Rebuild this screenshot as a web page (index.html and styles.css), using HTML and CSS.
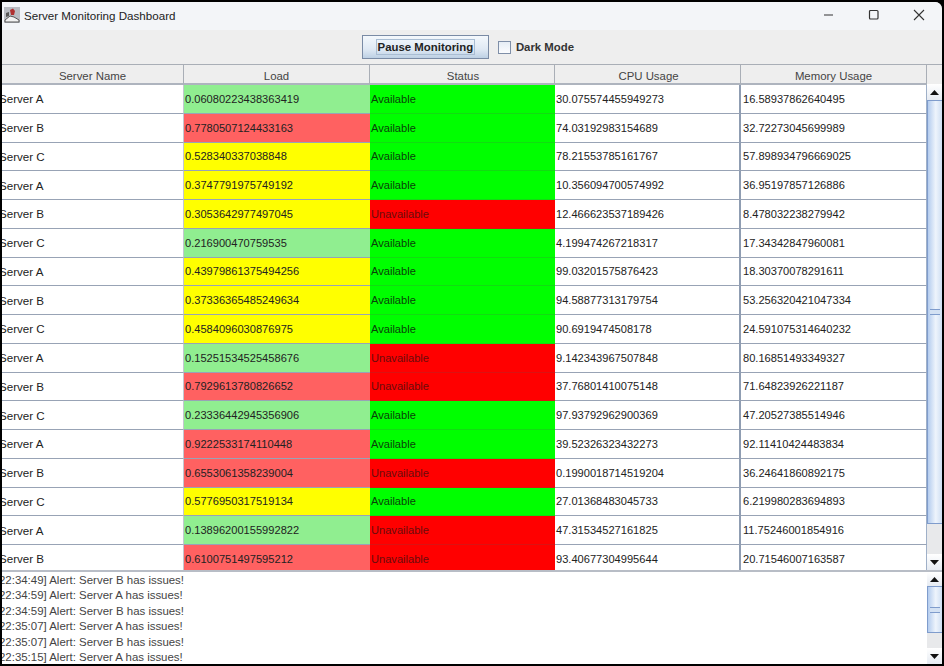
FILE: index.html
```html
<!DOCTYPE html>
<html lang="en">
<head>
<meta charset="utf-8">
<title>Server Monitoring Dashboard</title>
<link rel="stylesheet" href="styles.css">
</head>
<body>
<div class="window">
  <header class="titlebar">
    <svg class="app-icon" width="16" height="16" viewBox="0 0 16 16">
      <rect x="0" y="0" width="16" height="16" fill="#b9bcc2"/>
      <path d="M1 13 L6 9 L10 10 L15 13 L15 15 L1 15 Z" fill="#f2f2f2" stroke="#555" stroke-width="1"/>
      <path d="M6 3 L9 1.500 L11 4 L10 8 L7 8 Z" fill="#b03030"/>
      <path d="M2 6 L5 5 L5 9 L2 10 Z" fill="#555"/>
    </svg>
    <span class="title">Server Monitoring Dashboard</span>
    <div class="win-controls">
      <svg width="12" height="12" viewBox="0 0 12 12"><path d="M1 6 H10" stroke="#333" stroke-width="1.200" fill="none"/></svg>
      <svg width="12" height="12" viewBox="0 0 12 12"><rect x="1.500" y="1.500" width="8.500" height="8.500" rx="1" stroke="#333" stroke-width="1.200" fill="none"/></svg>
      <svg width="12" height="12" viewBox="0 0 12 12"><path d="M1 1 L11 11 M11 1 L1 11" stroke="#333" stroke-width="1.100" fill="none"/></svg>
    </div>
  </header>
  <div class="toolbar">
    <button class="pause"><span class="focus">Pause Monitoring</span></button>
    <label class="dark"><span class="box"></span>Dark Mode</label>
  </div>
  <div class="table-pane">
    <div class="table">
      <div class="row head"><div>Server Name</div><div>Load</div><div>Status</div><div>CPU Usage</div><div>Memory Usage</div></div>
      <div class="row"><div class="name">Server A</div><div class="g">0.06080223438363419</div><div class="a">Available</div><div class="cpu">30.075574455949273</div><div class="mem">16.58937862640495</div></div>
      <div class="row"><div class="name">Server B</div><div class="r">0.7780507124433163</div><div class="a">Available</div><div class="cpu">74.03192983154689</div><div class="mem">32.72273045699989</div></div>
      <div class="row"><div class="name">Server C</div><div class="y">0.528340337038848</div><div class="a">Available</div><div class="cpu">78.21553785161767</div><div class="mem">57.898934796669025</div></div>
      <div class="row"><div class="name">Server A</div><div class="y">0.3747791975749192</div><div class="a">Available</div><div class="cpu">10.356094700574992</div><div class="mem">36.95197857126886</div></div>
      <div class="row"><div class="name">Server B</div><div class="y">0.3053642977497045</div><div class="u">Unavailable</div><div class="cpu">12.466623537189426</div><div class="mem">8.478032238279942</div></div>
      <div class="row"><div class="name">Server C</div><div class="g">0.216900470759535</div><div class="a">Available</div><div class="cpu">4.199474267218317</div><div class="mem">17.34342847960081</div></div>
      <div class="row"><div class="name">Server A</div><div class="y">0.43979861375494256</div><div class="a">Available</div><div class="cpu">99.03201575876423</div><div class="mem">18.30370078291611</div></div>
      <div class="row"><div class="name">Server B</div><div class="y">0.37336365485249634</div><div class="a">Available</div><div class="cpu">94.58877313179754</div><div class="mem">53.256320421047334</div></div>
      <div class="row"><div class="name">Server C</div><div class="y">0.4584096030876975</div><div class="a">Available</div><div class="cpu">90.6919474508178</div><div class="mem">24.591075314640232</div></div>
      <div class="row"><div class="name">Server A</div><div class="g">0.15251534525458676</div><div class="u">Unavailable</div><div class="cpu">9.142343967507848</div><div class="mem">80.16851493349327</div></div>
      <div class="row"><div class="name">Server B</div><div class="r">0.7929613780826652</div><div class="u">Unavailable</div><div class="cpu">37.76801410075148</div><div class="mem">71.64823926221187</div></div>
      <div class="row"><div class="name">Server C</div><div class="g">0.23336442945356906</div><div class="a">Available</div><div class="cpu">97.93792962900369</div><div class="mem">47.20527385514946</div></div>
      <div class="row"><div class="name">Server A</div><div class="r">0.9222533174110448</div><div class="a">Available</div><div class="cpu">39.52326323432273</div><div class="mem">92.11410424483834</div></div>
      <div class="row"><div class="name">Server B</div><div class="r">0.6553061358239004</div><div class="u">Unavailable</div><div class="cpu">0.1990018714519204</div><div class="mem">36.24641860892175</div></div>
      <div class="row"><div class="name">Server C</div><div class="y">0.5776950317519134</div><div class="a">Available</div><div class="cpu">27.01368483045733</div><div class="mem">6.219980283694893</div></div>
      <div class="row"><div class="name">Server A</div><div class="g">0.13896200155992822</div><div class="u">Unavailable</div><div class="cpu">47.31534527161825</div><div class="mem">11.75246001854916</div></div>
      <div class="row last"><div class="name">Server B</div><div class="r">0.6100751497595212</div><div class="u">Unavailable</div><div class="cpu">93.40677304995644</div><div class="mem">20.71546007163587</div></div>
    </div>
    <div class="scrollcol">
      <div class="head-corner"></div>
      <div class="scrollbar table-bar">
        <div class="btn"><svg width="9" height="5" viewBox="0 0 9 5"><path d="M4.500 0 L9 5 H0 Z" fill="#111"/></svg></div>
        <div class="thumb"><span class="grip"></span></div>
        <div class="track"></div>
        <div class="btn"><svg width="9" height="5" viewBox="0 0 9 5"><path d="M0 0 H9 L4.500 5 Z" fill="#111"/></svg></div>
      </div>
    </div>
  </div>
  <div class="log-pane">
    <div class="log">
      <div>22:34:49] Alert: Server B has issues!</div>
      <div>22:34:59] Alert: Server A has issues!</div>
      <div>22:34:59] Alert: Server B has issues!</div>
      <div>22:35:07] Alert: Server A has issues!</div>
      <div>22:35:07] Alert: Server B has issues!</div>
      <div>22:35:15] Alert: Server A has issues!</div>
    </div>
    <div class="scrollbar log-bar">
      <div class="btn"><svg width="9" height="5" viewBox="0 0 9 5"><path d="M4.500 0 L9 5 H0 Z" fill="#111"/></svg></div>
      <div class="thumb"><span class="grip"></span></div>
      <div class="track"></div>
      <div class="btn"><svg width="9" height="5" viewBox="0 0 9 5"><path d="M0 0 H9 L4.500 5 Z" fill="#111"/></svg></div>
    </div>
  </div>
</div>
</body>
</html>
```
FILE: styles.css
```css
html, body { margin: 0; height: 100%; background: #000; overflow: hidden; }
body { font-family: "Liberation Sans", Arial, sans-serif; font-size: 11.1px; color: #222; }
.window {
  box-sizing: border-box; width: 940px; height: 662px; margin: 2px 0 0 2px;
  display: flex; flex-direction: column; background: #eeeeee; overflow: hidden;
  border-top-right-radius: 7px;
}
.titlebar {
  box-sizing: border-box; height: 28px; flex: none; display: flex; align-items: center;
  padding: 0 0 2px 2px; background: #f3f5f8;
}
.app-icon { flex: none; margin-right: 4px; }
.title { font-size: 11.6px; color: #222; }
.win-controls { margin-left: auto; display: flex; align-items: center; gap: 33px; margin-right: 17px; }
.win-controls svg { display: block; }
.toolbar {
  height: 34px; flex: none; display: flex; align-items: center; justify-content: center; gap: 9px;
  box-sizing: border-box; padding-right: 8px; background: #eeeeee;
}
.pause {
  width: 127px; height: 24px; padding: 0; display: flex; align-items: center; justify-content: center;
  border: 1px solid #7a8ba5; background: linear-gradient(#f4f8fc, #dfe9f4 60%, #bdd0e4);
  font: bold 11.4px "Liberation Sans", Arial, sans-serif; color: #222;
}
.focus { outline: 1px solid #a9bdd3; outline-offset: 0; padding: 0 1px; line-height: 14px; }
.dark { display: flex; align-items: center; gap: 5px; font-weight: bold; font-size: 11.4px; color: #333; }
.box { width: 11px; height: 11px; border: 1px solid #7f8fa8; background: linear-gradient(#e6edf5, #fbfcfe); }
.table-pane { height: 506px; flex: none; display: flex; background: #fff; }
.table { width: 925px; flex: none; overflow: hidden; }
.row {
  display: grid; grid-template-columns: 182px 186px 185px 186px 186px;
  height: 28.75px; background: #fff;
}
.row > div {
  box-sizing: border-box; display: flex; align-items: center; padding-left: 1px; white-space: nowrap; overflow: hidden;
  border-bottom: 1px solid #98a3b5; color: #222;
}
.row .name { padding-left: 0; text-indent: -3px; font-size: 11.6px; border-right: 1px solid #c3c8d0; }
.row > .cpu { border-right: 2px solid #8f9db2; }
.row > .mem { padding-left: 2px; border-right: 1px solid #9fb0c8; }
.row.last { height: 27px; }
.row.last > div { border-bottom: 0; }
.row.head { height: 21px; background: #eeeeee; }
.row.head > div {
  justify-content: center; padding: 3px 0 0; color: #444; font-size: 11.4px;
  border-top: 1px solid #a9aeb6; border-bottom: 2px solid #aeb4be; border-right: 1px solid #a9aeb6;
}
.row.head > div:nth-child(3), .row.head > div:nth-child(4) { padding-left: 2px; }
.row > .g { background: #90ee90; }
.row > .r { background: #ff6161; }
.row > .y { background: #ffff00; }
.row > .a { background: #00ff00; color: #0a3f0a; border-bottom-color: #12dc12; }
.row > .u { background: #ff0000; color: #6a0c0c; border-bottom-color: #dc1212; }
.scrollcol { width: 15px; flex: none; display: flex; flex-direction: column; }
.head-corner { height: 20px; flex: none; background: #eeeeee; border-top: 1px solid #a9aeb6; box-sizing: border-box; }
.scrollbar { display: flex; flex-direction: column; width: 15px; flex: 1; background: #f0f1f3; }
.btn { height: 16px; flex: none; display: flex; align-items: center; justify-content: center; background: linear-gradient(#ffffff, #e6ebf2); }
.thumb {
  flex: none; display: flex; align-items: center; justify-content: center; box-sizing: border-box;
  border: 1px solid #7f9ccc; border-right: 0;
  background: linear-gradient(90deg, #b4ccee, #eef4fc 55%, #cfdff3);
}
.grip { width: 10px; height: 4px; border-top: 1px solid #7f9ccc; border-bottom: 1px solid #7f9ccc; background: #d3e1f3; }
.table-bar .thumb { height: 424px; }
.track { flex: 1; background: #e8e9eb; }
.log-pane { flex: 1; min-height: 0; display: flex; background: #fff; border-top: 2px solid #b8bdc6; }
.log { flex: 1; padding: 1px 0 0 0; overflow: hidden; text-indent: -3px; color: #444; font-size: 11.45px; line-height: 15.4px; }
.log-bar { flex: none; }
.log-bar .btn:first-child { height: 14px; }
.log-bar .thumb { height: 47px; }
```
